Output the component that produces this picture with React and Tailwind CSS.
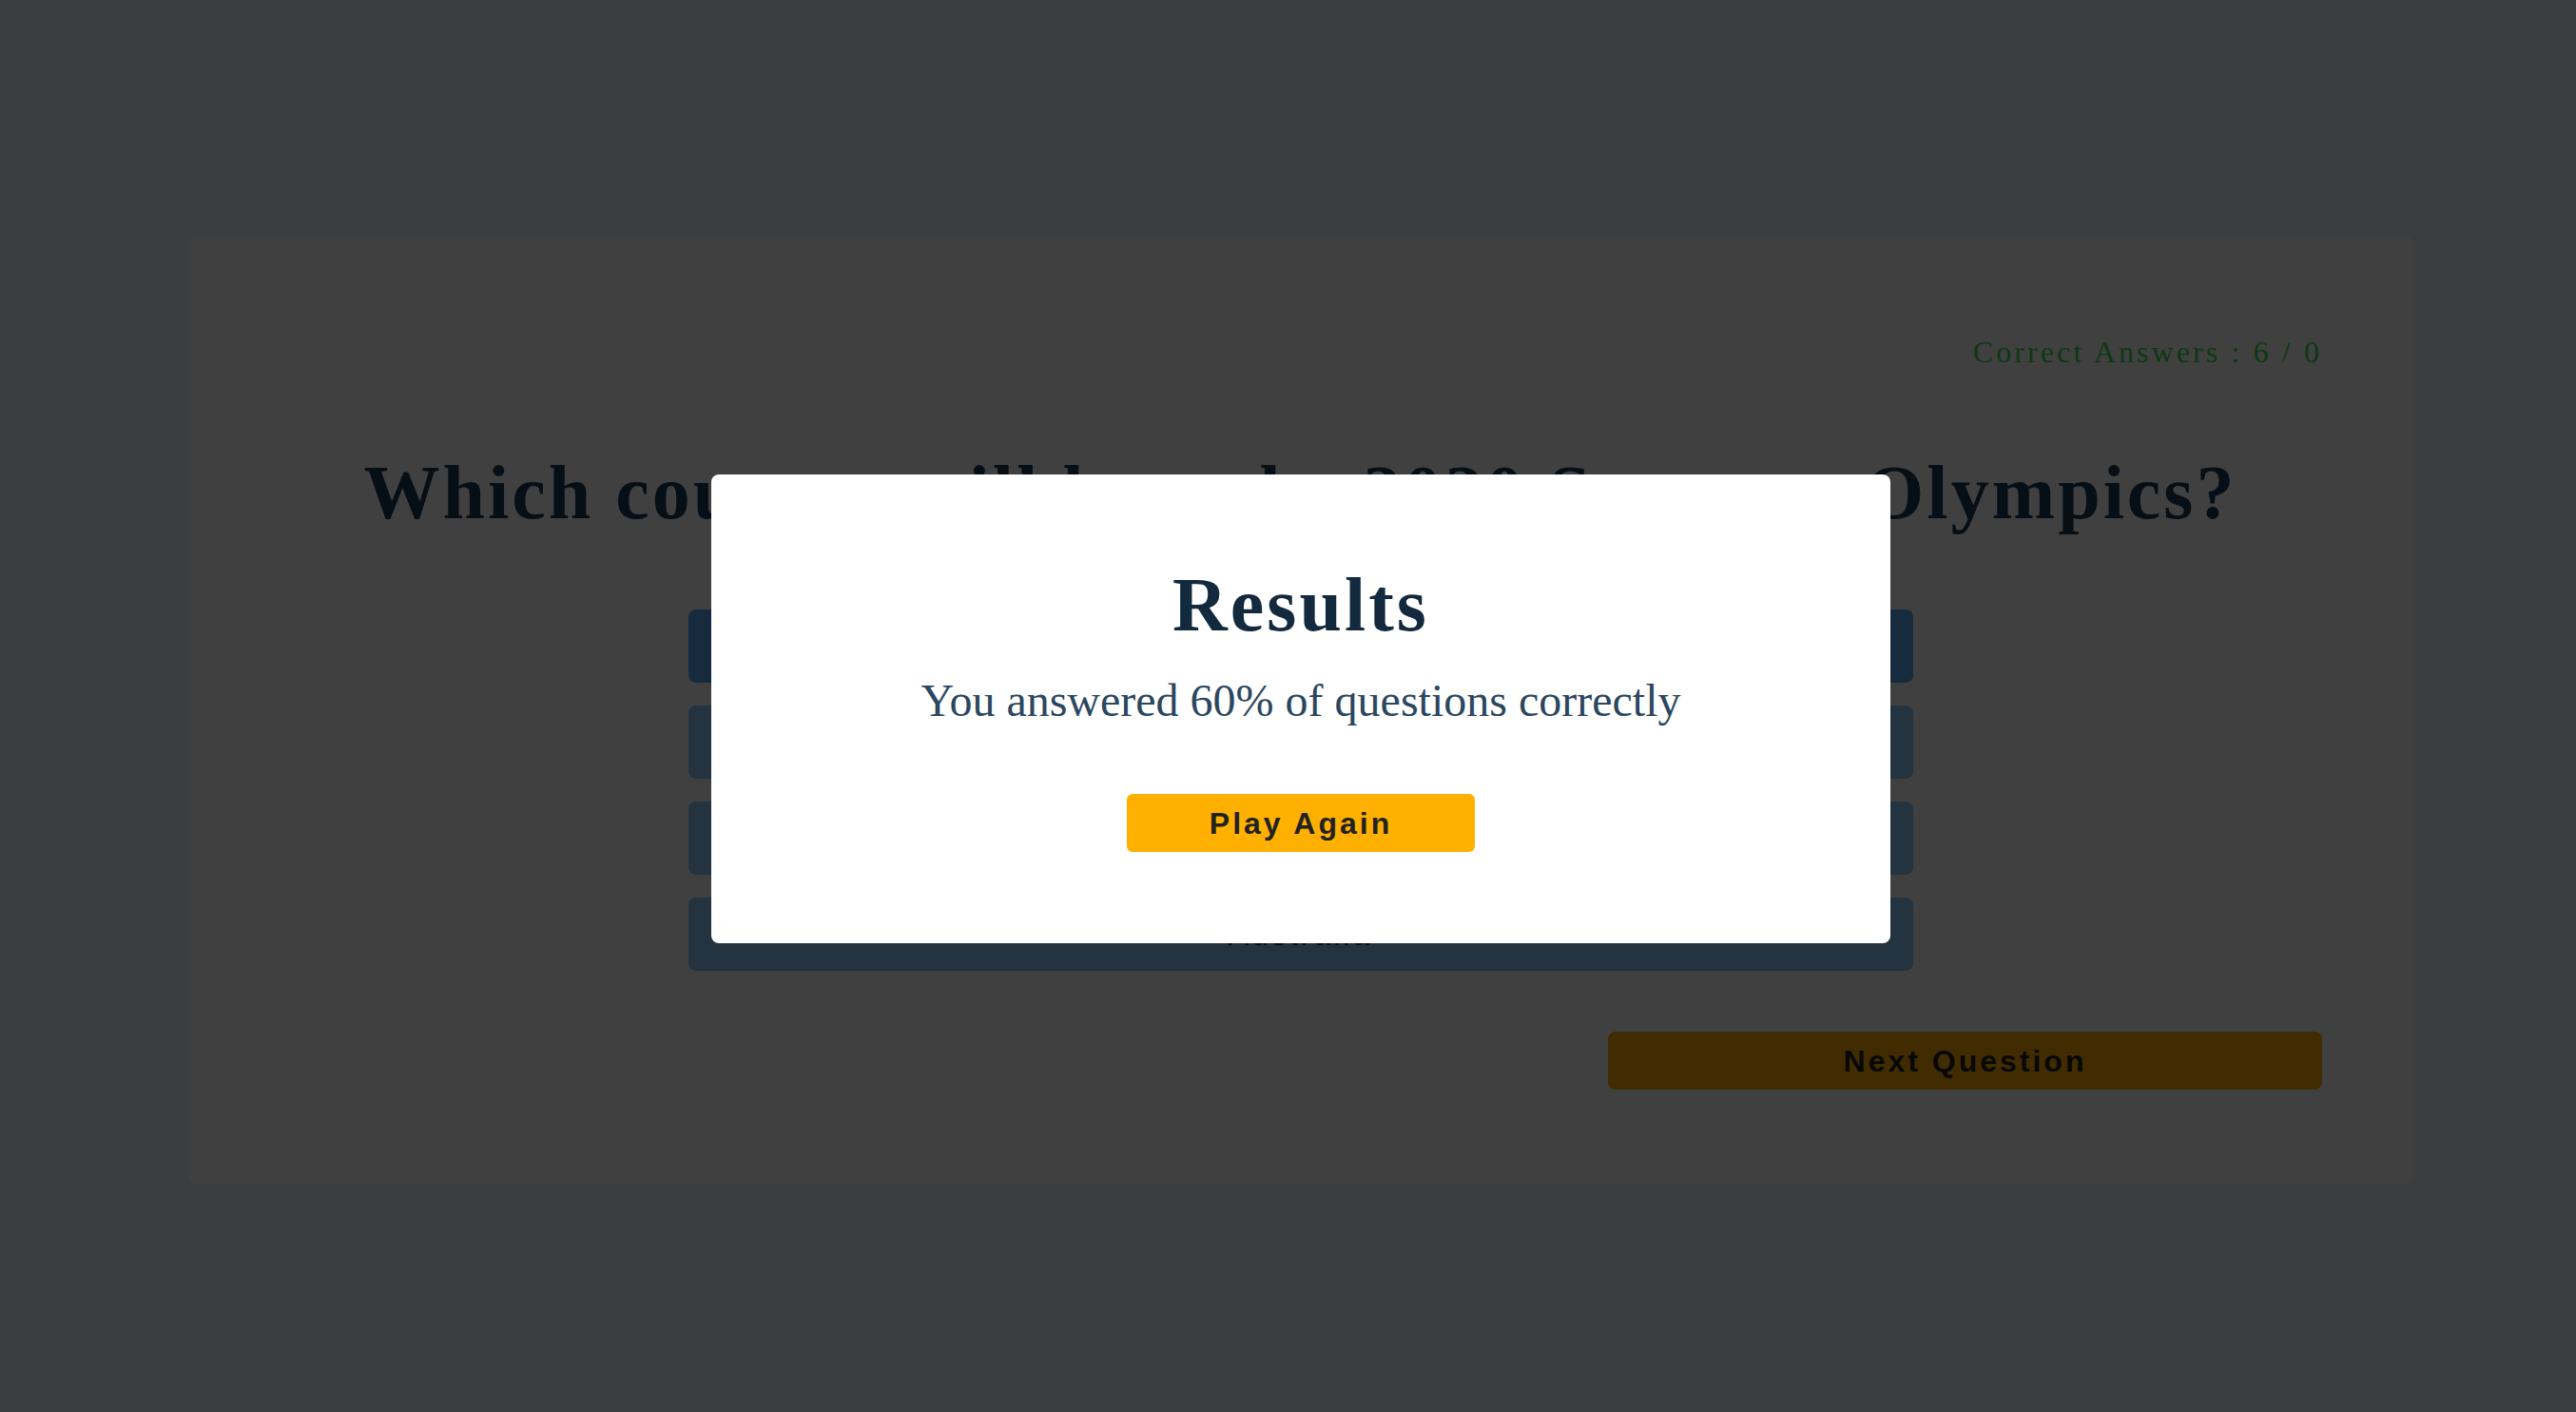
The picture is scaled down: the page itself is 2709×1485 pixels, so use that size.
export default function App() {
  const serif = { fontFamily: '"Liberation Serif", "Times New Roman", serif' };
  const answers = [
    { label: "Brazil", selected: true },
    { label: "Japan", selected: false },
    { label: "China", selected: false },
    { label: "Australia", selected: false },
  ];
  return (
    <div className="relative min-h-screen w-full bg-[#f0f4fc] pl-[198px] pr-[172px] pt-[249px] pb-[240px] font-['Liberation_Sans',Arial,sans-serif]">
      <div className="flex w-full flex-col rounded-lg bg-white px-[95px] pt-[105px] pb-[99px]">
        <p
          className="text-right text-[32px] leading-none tracking-[3.1px] text-[#30e04c]"
          style={serif}
        >
          Correct Answers : 6 / 0
        </p>
        <h1
          className="mt-[92px] text-center text-[80px] font-bold leading-none tracking-[3px] text-[#183858]"
          style={serif}
        >
          Which country will host the 2020 Summer Olympics?
        </h1>
        <div className="mx-auto mt-[83px] flex w-[1288px] flex-col gap-[24px]">
          {answers.map((a) => (
            <button
              key={a.label}
              className={
                "flex h-[77px] w-full items-center justify-center rounded-lg text-[32px] leading-none tracking-[3px] text-[#222222] " +
                (a.selected ? "bg-[#58acf4]" : "bg-[#8cccff]")
              }
            >
              {a.label}
            </button>
          ))}
        </div>
        <button className="mt-[64px] ml-auto flex h-[61px] w-[751px] items-center justify-center rounded-lg bg-[#ffb000] text-[32px] font-bold leading-none tracking-[3px] text-[#222222]">
          Next Question
        </button>
      </div>

      <div className="fixed inset-0 bg-[rgba(0,0,0,0.75)]">
        <div className="absolute left-[748px] top-[499px] flex h-[493px] w-[1240px] flex-col items-center rounded-lg bg-white pt-[97px]">
          <h2
            className="text-[80px] font-bold leading-none tracking-[3px] text-[#13293d]"
            style={serif}
          >
            Results
          </h2>
          <p
            className="mt-[37px] text-[48px] leading-none text-[#2b4760]"
            style={serif}
          >
            You answered 60% of questions correctly
          </p>
          <button className="mt-[74px] flex h-[61px] w-[366px] items-center justify-center rounded-md bg-[#ffb000] text-[32px] font-bold leading-none tracking-[3px] text-[#222222]">
            Play Again
          </button>
        </div>
      </div>
    </div>
  );
}
